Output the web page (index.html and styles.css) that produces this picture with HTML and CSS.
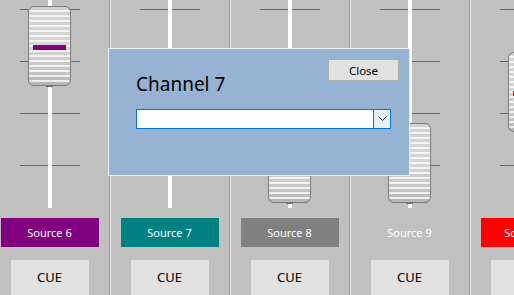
FILE: index.html
```html
<!DOCTYPE html>
<html>
<head>
<meta charset="utf-8">
<link rel="stylesheet" href="styles.css">
</head>
<body>
<div class="mixer">
  <div class="channel">
    <div class="fader">
      <div class="ticks"><i></i><i></i><i></i><i></i></div>
      <div class="track"></div>
      <div class="knob" style="top:6px"><div class="knob-bar" style="background:#800080"></div></div>
    </div>
    <div class="label" style="background:#800080">Source 6</div>
    <button class="cue">CUE</button>
  </div>
  <div class="channel">
    <div class="fader">
      <div class="ticks"><i></i><i></i><i></i><i></i></div>
      <div class="track"></div>
      <div class="knob" style="top:70px"><div class="knob-bar" style="background:#008080"></div></div>
    </div>
    <div class="label" style="background:#008080">Source 7</div>
    <button class="cue">CUE</button>
  </div>
  <div class="channel">
    <div class="fader">
      <div class="ticks"><i></i><i></i><i></i><i></i></div>
      <div class="track"></div>
      <div class="knob" style="top:123px"><div class="knob-bar" style="background:#808080"></div></div>
    </div>
    <div class="label" style="background:#808080">Source 8</div>
    <button class="cue">CUE</button>
  </div>
  <div class="channel">
    <div class="fader">
      <div class="ticks"><i></i><i></i><i></i><i></i></div>
      <div class="track"></div>
      <div class="knob" style="top:123px"><div class="knob-bar" style="background:transparent"></div></div>
    </div>
    <div class="label">Source 9</div>
    <button class="cue">CUE</button>
  </div>
  <div class="channel">
    <div class="fader">
      <div class="ticks"><i></i><i></i><i></i><i></i></div>
      <div class="track"></div>
      <div class="knob" style="top:52px"><div class="knob-bar" style="background:#ff0000"></div></div>
    </div>
    <div class="label" style="background:#ff0000">Source 10</div>
    <button class="cue">CUE</button>
  </div>
</div>

<div class="dialog">
  <div class="dialog-head">
    <div class="dialog-title">Channel 7</div>
    <button class="close-btn">Close</button>
  </div>
  <div class="combo">
    <div class="combo-field"></div>
    <div class="combo-btn">
      <svg width="9" height="6" viewBox="0 0 9 6"><polyline points="0.5,0.5 4.5,4.5 8.5,0.5" fill="none" stroke="#333" stroke-width="1"/></svg>
    </div>
  </div>
</div>
</body>
</html>
```

FILE: styles.css
```css
html, body {
  margin: 0;
  padding: 0;
}
body {
  width: 514px;
  height: 295px;
  overflow: hidden;
  background: #c0c0c0;
  font-family: "Noto Sans", "Open Sans", sans-serif;
  position: relative;
}
.mixer {
  display: flex;
  margin-left: -10px;
  height: 295px;
}
.channel {
  flex: 0 0 119px;
  width: 119px;
  border-right: 1px solid #9a9a9a;
  box-shadow: inset 1px 0 0 #ececec;
  display: flex;
  flex-direction: column;
  align-items: center;
}
.fader {
  position: relative;
  width: 119px;
  height: 208px;
  flex: 0 0 208px;
}
.ticks {
  position: absolute;
  left: 30px;
  top: 9px;
  width: 60px;
  display: flex;
  flex-direction: column;
  gap: 51px;
}
.ticks i {
  display: block;
  height: 1px;
  background: #6a6a6a;
}
.track {
  position: absolute;
  left: 58px;
  top: 0;
  width: 4px;
  height: 208px;
  background: #ffffff;
}
.knob {
  position: absolute;
  left: 38px;
  width: 41px;
  height: 78px;
  border: 1px solid #7c7c7c;
  border-radius: 6px;
  background:
    repeating-linear-gradient(to bottom, rgba(255,255,255,0) 0 3px, rgba(255,255,255,0.75) 3px 5px),
    linear-gradient(to bottom, #d2d2d2 0%, #d6d6d6 50%, #c4c4c4 85%, #b4b4b4 100%);
}
.knob::after {
  content: "";
  position: absolute;
  left: 17px;
  bottom: -2px;
  width: 7px;
  height: 1px;
  background: #6a6a6a;
}
.knob-bar {
  position: absolute;
  left: 4px;
  top: 38px;
  width: 33px;
  height: 5px;
}
.label {
  margin-top: 10px;
  width: 98px;
  height: 33px;
  display: flex;
  align-items: center;
  justify-content: center;
  color: #ffffff;
  font-size: 11px;
}
.cue {
  margin-top: 13px;
  width: 78px;
  height: 40px;
  border: none;
  background: #e1e1e1;
  font-family: "Noto Sans", "Open Sans", sans-serif;
  font-size: 13px;
  color: #000;
  padding: 0;
}
.dialog {
  position: absolute;
  left: 108px;
  top: 48px;
  width: 300px;
  height: 126px;
  border: 1px solid #ececec;
  background: #97b3d3;
  box-sizing: content-box;
  padding: 0;
}
.dialog-head {
  display: flex;
  justify-content: space-between;
  align-items: flex-start;
  padding: 10px 10px 0 27px;
}
.dialog-title {
  margin-top: 12px;
  font-size: 19px;
  line-height: 26px;
  color: #000;
}
.close-btn {
  width: 71px;
  height: 22px;
  border: 1px solid #adadad;
  background: #e1e1e1;
  font-family: "Noto Sans", "Open Sans", sans-serif;
  font-size: 11.5px;
  color: #000;
  padding: 0;
}
.combo {
  margin: 12px 0 0 27px;
  width: 255px;
  height: 20px;
  box-sizing: border-box;
  border: 1px solid #0078d7;
  display: flex;
  background: #fff;
}
.combo-field {
  flex: 1;
}
.combo-btn {
  width: 16px;
  border-left: 1px solid #0078d7;
  background: #e5f1fb;
  display: flex;
  align-items: center;
  justify-content: center;
}
```
